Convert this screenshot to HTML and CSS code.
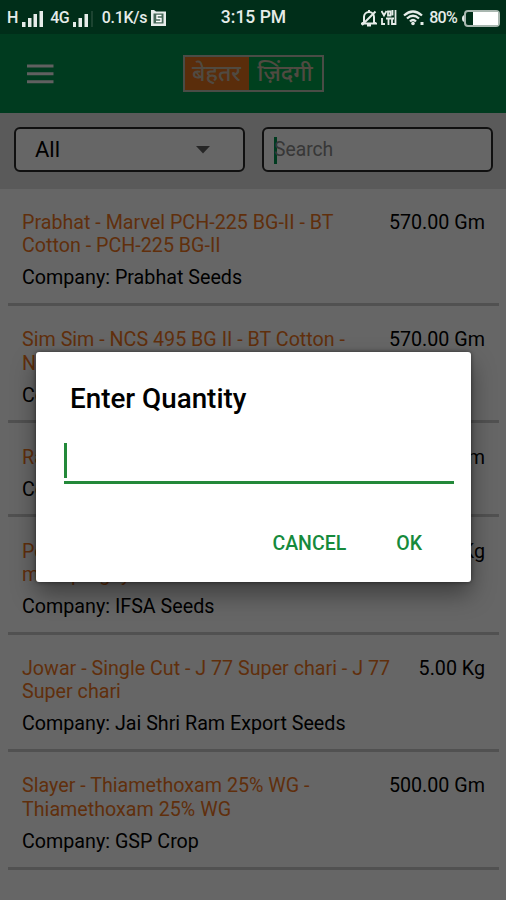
FILE: index.html
```
<!DOCTYPE html>
<html lang="en">
<head>
  <meta charset="utf-8">
  <title>Enter Quantity</title>
  <link rel="stylesheet" href="styles.css">
</head>
<body>
  <div class="status-bar">
    <div class="status-left">
      <span class="network">H</span>
      <svg class="signal" width="22" height="17" viewBox="0 0 22 17"><path d="M0 12h3.500v5H0zM6 8h3.500v9H6zM11.500 4H15v13h-3.500zM17.500 1H21v16h-3.500z" fill="#e6ece9"/></svg>
      <span class="network lte">4G</span>
      <svg class="signal" width="20" height="17" viewBox="0 0 20 17"><path d="M0 12h3v5H0zM5.500 8h3.500v9H5.500zM11.500 4H15v13h-3.500z" fill="#e6ece9"/><path d="M18 1h2v16h-2z" fill="#1c4431"/></svg>
      <span class="speed">0.1K/s</span>
      <svg class="sim" width="15" height="16" viewBox="0 0 15 16"><path d="M0 0h3l2 1.500h10V16H0z" fill="#e6ece9"/><path d="M2.500 3.500h10v10h-10z" fill="#456757"/><path d="M10.500 5.500H6v3h4v3H5" fill="none" stroke="#fff" stroke-width="1.400"/></svg>
    </div>
    <div class="clock">3:15 PM</div>
    <div class="status-right">
      <svg width="16" height="17" viewBox="0 0 16 17"><path d="M3 12V7a5 5 0 0 1 10 0v5l2 1.500H1zM6 15.500h4M8 0v2" fill="none" stroke="#e6ece9" stroke-width="2"/><path d="M1 15L14.500 1.500" stroke="#e6ece9" stroke-width="2"/></svg>
      <svg class="volte" width="16" height="16" viewBox="0 0 16 16"><path d="M.5 1L3 5.500 5.500 1M7 1.500h2.500v4H7zM11.500 0v5.500M14.500 0v15M1 8v6h3M5 8.500h5M7.500 8v7M13 8.500h-2v5.500h3" fill="none" stroke="#e6ece9" stroke-width="1.800"/></svg>
      <svg class="wifi" width="22" height="16" viewBox="0 0 22 16"><path d="M1 5.500Q10 -2.500 19 5.500M4 8.500Q10 3 16 8.500M7 11.500Q10 8.500 13 11.500" fill="none" stroke="#e6ece9" stroke-width="2.300"/><circle cx="10" cy="13.500" r="1.800" fill="#e6ece9"/><path d="M17.500 12h3v3h-3z" fill="#e6ece9"/></svg>
      <span class="percent">80%</span>
      <svg class="battery" width="38" height="17" viewBox="0 0 38 17"><path d="M3 5Q0 5 0 8.500T3 12z" fill="#e6ece9"/><rect x="3" y="1" width="34" height="15" rx="3" fill="none" stroke="#a9b7b0" stroke-width="2"/><path d="M11 2h25v13H11z" fill="#fff"/></svg>
    </div>
  </div>

  <div class="app">
    <div class="header">
      <svg class="menu" width="27" height="20" viewBox="0 0 27 20"><path d="M0 2h26.500M0 9.700h26.500M0 17.700h26.500" stroke="#f0f0f0" stroke-width="3"/></svg>
      <div class="logo">
        <span class="logo-left">बेहतर</span>
        <span class="logo-right">ज़िंदगी</span>
      </div>
    </div>

    <div class="filters">
      <div class="field select">
        <span>All</span>
        <svg width="14" height="8" viewBox="0 0 14 8"><path d="M0 0h14L7 7.500z" fill="#606060"/></svg>
      </div>
      <div class="field search"><span class="search-cursor"></span><span>Search</span></div>
    </div>

    <div class="list">
      <div class="item">
        <div class="row">
          <div class="name">Prabhat - Marvel PCH-225 BG-II - BT<br>Cotton - PCH-225 BG-II</div>
          <div class="qty">570.00 Gm</div>
        </div>
        <div class="company">Company: Prabhat Seeds</div>
      </div>
      <div class="item">
        <div class="row">
          <div class="name">Sim Sim - NCS 495 BG II - BT Cotton -<br>NCS 495 BG II</div>
          <div class="qty">570.00 Gm</div>
        </div>
        <div class="company">Company: Sim</div>
      </div>
      <div class="item">
        <div class="row">
          <div class="name">Rasi</div>
          <div class="qty">570.00 Gm</div>
        </div>
        <div class="company">Company: Rasi</div>
      </div>
      <div class="item">
        <div class="row">
          <div class="name">Pearl Millet<br>multi pargay</div>
          <div class="qty">5.00 Kg</div>
        </div>
        <div class="company">Company: IFSA Seeds</div>
      </div>
      <div class="item">
        <div class="row">
          <div class="name">Jowar - Single Cut - J 77 Super chari - J 77<br>Super chari</div>
          <div class="qty">5.00 Kg</div>
        </div>
        <div class="company">Company: Jai Shri Ram Export Seeds</div>
      </div>
      <div class="item">
        <div class="row">
          <div class="name">Slayer - Thiamethoxam 25% WG -<br>Thiamethoxam 25% WG</div>
          <div class="qty">500.00 Gm</div>
        </div>
        <div class="company">Company: GSP Crop</div>
      </div>
    </div>
  </div>

  <div class="overlay">
    <div class="dialog">
      <div class="dialog-title">Enter Quantity</div>
      <div class="quantity"><span class="cursor"></span></div>
      <div class="actions">
        <span class="button">CANCEL</span>
        <span class="button">OK</span>
      </div>
    </div>
  </div>
</body>
</html>
```
FILE: styles.css
```
* {
  box-sizing: border-box;
}

body {
  margin: 0;
  width: 506px;
  height: 900px;
  overflow: hidden;
  position: relative;
  font-family: Roboto, "Noto Sans", sans-serif;
  font-size: 19.7px;
  line-height: 23.4px;
  color: #000;
  background: #fff;
}

svg {
  display: block;
  flex: none;
}

/* status bar */
.status-bar {
  display: grid;
  grid-template-columns: 1fr auto 1fr;
  align-items: center;
  height: 34px;
  padding: 2px 6px 0 7px;
  background: #002e19;
  color: #e6ece9;
  font-size: 16px;
  white-space: nowrap;
}

.status-left,
.status-right {
  display: flex;
  align-items: center;
}

.status-right {
  justify-content: flex-end;
}

.network,
.speed,
.percent {
  font-weight: 500;
}

.signal {
  margin-left: 4px;
}

.lte {
  margin-left: 6px;
  letter-spacing: -0.8px;
}

.speed {
  margin-left: 9px;
  letter-spacing: -0.3px;
}

.sim {
  margin-left: 4px;
}

.clock {
  padding-left: 0;
  font-size: 17.5px;
  font-weight: 500;
}

.volte {
  margin-left: 4px;
}

.wifi {
  margin-left: 6px;
}

.percent {
  margin-left: 4px;
  letter-spacing: -0.7px;
}

.battery {
  margin-left: 5px;
}

/* top bar */
.header {
  display: grid;
  grid-template-columns: 1fr auto 1fr;
  align-items: center;
  height: 79px;
  padding-left: 27px;
  padding-right: 27px;
  background: #00934e;
}

.logo {
  display: flex;
  width: 141px;
  height: 37px;
  border: 2px solid #b8beae;
  color: #c8b8a4;
  font-size: 23px;
  font-weight: 500;
  line-height: 33px;
  text-align: center;
  white-space: nowrap;
}

.logo-left {
  width: 64px;
  background: #e0701c;
}

.logo-right {
  flex: 1;
  background: #00a04c;
}

/* filters */
.filters {
  display: flex;
  gap: 17px;
  height: 76px;
  padding: 14px 14px 0;
  background: #e0e0e0;
}

.field {
  display: flex;
  align-items: center;
  flex: none;
  width: 231px;
  height: 45px;
  border: 2px solid #282828;
  border-radius: 6px;
  background: #fff;
}

.select {
  justify-content: space-between;
  padding: 1px 33px 0 19px;
  font-size: 22px;
}

.search {
  padding: 1px 0 0 10px;
  color: #8a8a8a;
  font-size: 19.3px;
}

.search-cursor {
  width: 3px;
  height: 27px;
  margin-right: -3px;
  background: #00934e;
}

/* products */
.list {
  padding: 0 7px 0 8px;
}

.item {
  padding: 22.3px 14px 13.4px;
  border-bottom: 3px solid #cacaca;
}

.item:first-child {
  padding-top: 21.8px;
}

.row {
  display: flex;
  justify-content: space-between;
  white-space: nowrap;
}

.qty {
  font-size: 19.7px;
}

.name {
  color: #f0761e;
}

.company {
  margin-top: 8.5px;
}

/* dialog */
.overlay {
  position: absolute;
  top: 34px;
  left: 0;
  right: 0;
  bottom: 0;
  padding: 318px 35px 0 36px;
  background: rgba(0, 0, 0, 0.6);
}

.dialog {
  height: 230px;
  padding: 29px 17px 0 28px;
  border-radius: 3px;
  background: #fff;
  box-shadow: 0 12px 24px rgba(0, 0, 0, 0.4), 0 0 4px rgba(0, 0, 0, 0.5);
}

.dialog-title {
  padding-left: 6px;
  font-size: 27.8px;
  font-weight: 500;
  line-height: 35px;
}

.quantity {
  height: 41px;
  margin-top: 27px;
  border-bottom: 3px solid #23893a;
}

.cursor {
  display: block;
  width: 3px;
  height: 35px;
  background: #23893a;
}

.actions {
  display: flex;
  justify-content: flex-end;
  gap: 50px;
  margin-top: 48px;
  padding-right: 32px;
  color: #168a3c;
  font-size: 19.5px;
  font-weight: 500;
}
```
